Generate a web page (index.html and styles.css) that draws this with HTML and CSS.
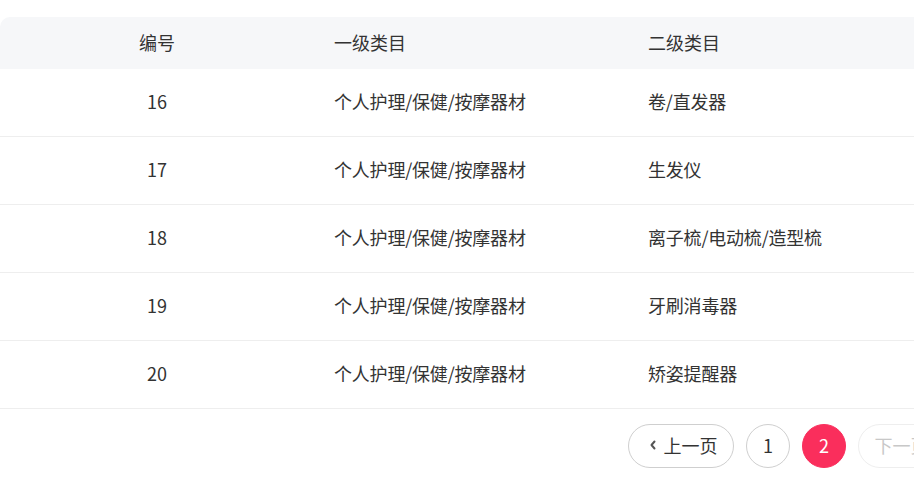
FILE: index.html
```html
<!DOCTYPE html>
<html lang="zh-CN">
<head>
<meta charset="utf-8">
<title>类目列表</title>
<link rel="stylesheet" href="styles.css">
</head>
<body>
<div class="page">
  <table class="grid">
    <colgroup>
      <col class="c-id">
      <col class="c-cat">
      <col class="c-sub">
    </colgroup>
    <thead>
      <tr>
        <th class="center">编号</th>
        <th>一级类目</th>
        <th>二级类目</th>
      </tr>
    </thead>
    <tbody>
      <tr><td class="center">16</td><td>个人护理/保健/按摩器材</td><td>卷/直发器</td></tr>
      <tr><td class="center">17</td><td>个人护理/保健/按摩器材</td><td>生发仪</td></tr>
      <tr><td class="center">18</td><td>个人护理/保健/按摩器材</td><td>离子梳/电动梳/造型梳</td></tr>
      <tr><td class="center">19</td><td>个人护理/保健/按摩器材</td><td>牙刷消毒器</td></tr>
      <tr><td class="center">20</td><td>个人护理/保健/按摩器材</td><td>矫姿提醒器</td></tr>
    </tbody>
  </table>
  <div class="pager">
    <button class="pbtn wide prev">
      <svg class="chev" width="8" height="10" viewBox="0 0 8 10"><polyline points="5.5,1.5 2.5,5 5.5,8.5" fill="none" stroke="#555" stroke-width="2" stroke-linecap="round" stroke-linejoin="round"/></svg>
      上一页
    </button>
    <button class="pbtn num">1</button>
    <button class="pbtn num active">2</button>
    <button class="pbtn wide next disabled">
      下一页
      <svg class="chev" width="8" height="10" viewBox="0 0 8 10"><polyline points="2.5,1.5 5.5,5 2.5,8.5" fill="none" stroke="#cccccc" stroke-width="2" stroke-linecap="round" stroke-linejoin="round"/></svg>
    </button>
  </div>
</div>
</body>
</html>
```
FILE: styles.css
```css
html, body {
  margin: 0;
  padding: 0;
  overflow: hidden;
  background: #ffffff;
}
body {
  font-family: "Noto Sans CJK SC", "Noto Sans", sans-serif;
  color: #333333;
  font-size: 18px;
}
.page {
  width: 985px;
  padding-top: 17px;
}
.grid {
  width: 100%;
  border-collapse: separate;
  border-spacing: 0;
  table-layout: fixed;
}
.c-id { width: 314px; }
.c-cat { width: 314px; }
.grid th {
  background: #f6f7f9;
  height: 50px;
  padding: 0 20px 2px;
  font-weight: normal;
  text-align: left;
  color: #333333;
}
.grid th:first-child { border-top-left-radius: 10px; }
.grid th:last-child { border-top-right-radius: 10px; }
.grid td {
  height: 64px;
  padding: 0 20px 3px;
  border-bottom: 1px solid #eeeeee;
  color: #333333;
  white-space: nowrap;
  letter-spacing: -0.2px;
}
.grid .center { text-align: center; letter-spacing: 0; }
.pager {
  display: flex;
  justify-content: flex-end;
  gap: 12px;
  padding-top: 15px;
  padding-right: 21px;
}
.pbtn {
  height: 44px;
  border: 1px solid #cfcfcf;
  background: #ffffff;
  border-radius: 22px;
  font-family: inherit;
  font-size: 18px;
  color: #333333;
  display: flex;
  align-items: center;
  justify-content: center;
  padding: 0 0 2px;
  gap: 7px;
}
.pbtn.wide { width: 106px; }
.pbtn.prev { padding-left: 4px; }
.pbtn.next { padding-right: 4px; }
.pbtn.num { width: 44px; }
.pbtn.active {
  background: #fa2e5c;
  border-color: #fa2e5c;
  color: #ffffff;
}
.pbtn.disabled {
  border-color: #eeeeee;
  color: #c8c8c8;
}
.chev { display: block; }
```
